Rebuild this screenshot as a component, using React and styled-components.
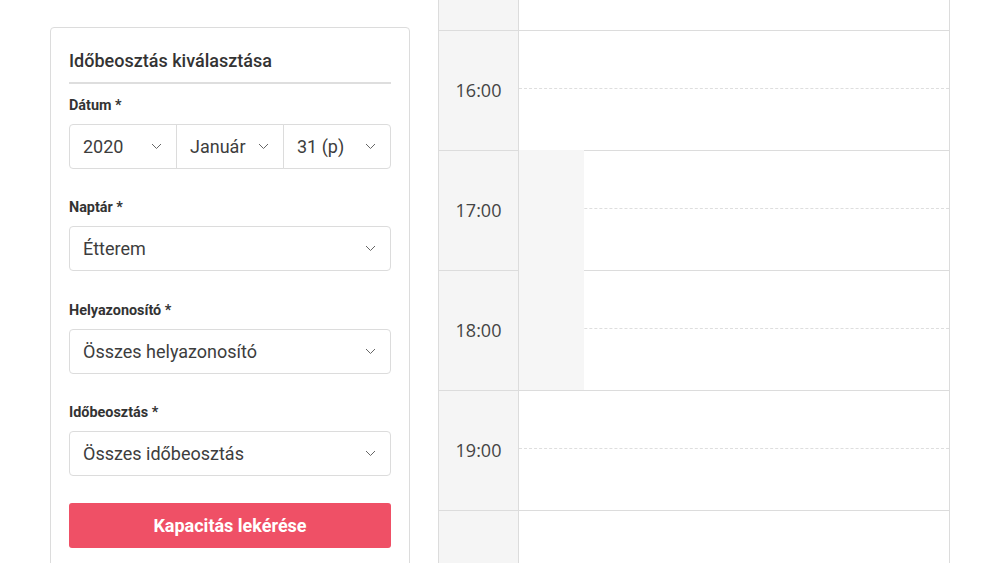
import React from "react";
import styled, { createGlobalStyle } from "styled-components";

const Global = createGlobalStyle`
  html, body { margin: 0; padding: 0; background: #fff; overflow: hidden; height: 563px; }
  * { box-sizing: border-box; }
  body { font-family: Roboto, "Noto Sans", sans-serif; }
`;

const Page = styled.div`
  display: flex;
  align-items: flex-start;
  padding-left: 50px;
  height: 563px;
  overflow: hidden;
`;

const Panel = styled.section`
  width: 360px;
  margin-top: 27px;
  border: 1px solid #dcdcdc;
  border-radius: 4px;
  padding: 20px 18px 22px;
  background: #fff;
`;

const Title = styled.h2`
  margin: 0 0 10px;
  padding: 1px 0 9px;
  border-bottom: 2px solid #dedede;
  font-size: 18px;
  line-height: 24px;
  font-weight: 500;
  color: #333;
`;

const Field = styled.div`
  margin-bottom: ${(p) => p.$mb}px;
`;

const Label = styled.div`
  font-size: 14.4px;
  line-height: 20px;
  font-weight: 700;
  color: #333;
  padding-top: 2px;
  margin-bottom: 8px;
`;

const DateRow = styled.div`
  display: flex;
`;

const SelectBox = styled.div`
  flex: 1;
  min-width: 0;
  height: 45px;
  border: 1px solid #dcdcdc;
  display: flex;
  align-items: center;
  justify-content: space-between;
  padding: 0 14px 0 13px;
  font-size: 18px;
  color: #3d3d3d;
  background: #fff;
  border-radius: ${(p) => p.$radius || "4px"};
  margin-left: ${(p) => (p.$joined ? "-1px" : "0")};
`;

const Chevron = () => (
  <svg width="11" height="7" viewBox="0 0 11 7" aria-hidden="true">
    <polyline points="1,1 5.5,5.5 10,1" fill="none" stroke="#666" strokeWidth="1" />
  </svg>
);

const Button = styled.button`
  display: block;
  width: 100%;
  height: 45px;
  border: none;
  border-radius: 3px;
  background: #ef5066;
  color: #fff;
  font-family: Roboto, sans-serif;
  font-size: 18px;
  font-weight: 700;
  cursor: pointer;
`;

const Calendar = styled.div`
  position: relative;
  margin-left: 28px;
  width: 512px;
  border-left: 1px solid #dcdcdc;
  border-right: 1px solid #dcdcdc;
  height: 563px;
`;

const Row = styled.div`
  display: flex;
  height: ${(p) => p.$h}px;
  border-bottom: 1px solid #dcdcdc;
`;

const TimeCell = styled.div`
  width: 80px;
  flex: none;
  background: #f5f5f5;
  border-right: 1px solid #dcdcdc;
  display: flex;
  align-items: center;
  justify-content: center;
  font-family: "Open Sans", "Noto Sans", sans-serif;
  font-size: 18px;
  color: #444;
  padding-bottom: 1px;
`;

const SlotCell = styled.div`
  flex: 1;
  display: flex;
  flex-direction: column;
`;

const HalfSlot = styled.div`
  height: ${(p) => p.$h}px;
  border-bottom: ${(p) => (p.$dashed ? "1px dashed #dedede" : "none")};
`;

const Blocked = styled.div`
  position: absolute;
  left: 80px;
  top: 150px;
  width: 65px;
  height: 240px;
  background: #f6f6f6;
`;

const hours = ["16:00", "17:00", "18:00", "19:00"];

function Select({ children, radius, joined }) {
  return (
    <SelectBox $radius={radius} $joined={joined}>
      <span>{children}</span>
      <Chevron />
    </SelectBox>
  );
}

export default function App() {
  return (
    <>
      <Global />
      <Page>
        <Panel>
          <Title>Időbeosztás kiválasztása</Title>
          <Field $mb={27}>
            <Label>Dátum *</Label>
            <DateRow>
              <Select radius="4px 0 0 4px">2020</Select>
              <Select radius="0" joined>Január</Select>
              <Select radius="0 4px 4px 0" joined>31 (p)</Select>
            </DateRow>
          </Field>
          <Field $mb={28}>
            <Label>Naptár *</Label>
            <Select>Étterem</Select>
          </Field>
          <Field $mb={27}>
            <Label>Helyazonosító *</Label>
            <Select>Összes helyazonosító</Select>
          </Field>
          <Field $mb={27}>
            <Label>Időbeosztás *</Label>
            <Select>Összes időbeosztás</Select>
          </Field>
          <Button>Kapacitás lekérése</Button>
        </Panel>
        <Calendar>
          <Row $h={31}>
            <TimeCell />
            <SlotCell />
          </Row>
          {hours.map((h) => (
            <Row $h={120} key={h}>
              <TimeCell>{h}</TimeCell>
              <SlotCell>
                <HalfSlot $h={58} $dashed />
                <HalfSlot $h={61} />
              </SlotCell>
            </Row>
          ))}
          <Row $h={120}>
            <TimeCell />
            <SlotCell />
          </Row>
          <Blocked />
        </Calendar>
      </Page>
    </>
  );
}
